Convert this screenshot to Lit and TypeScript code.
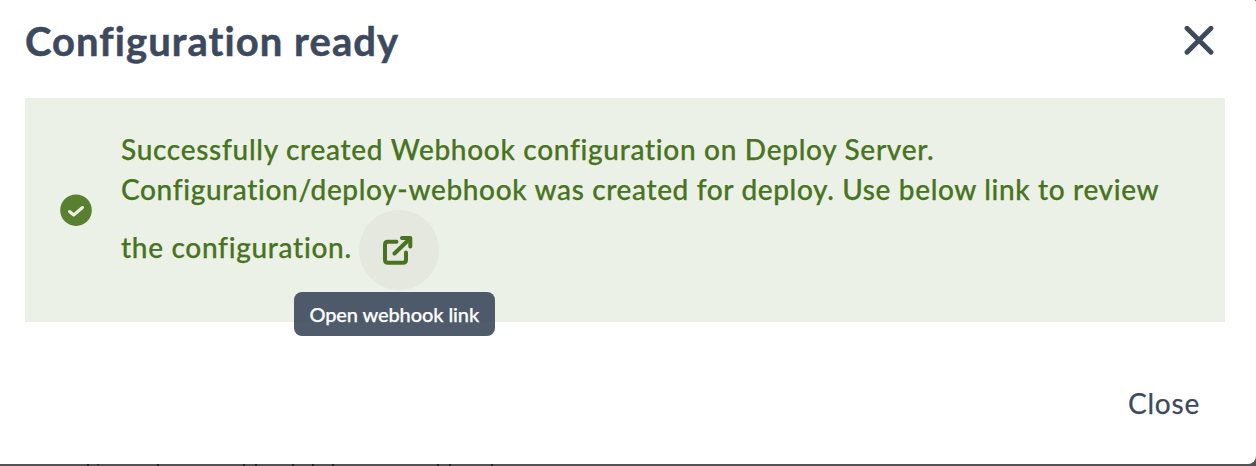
import { LitElement, html, svg, css } from "lit";
import { customElement } from "lit/decorators.js";

@customElement("app-root")
export class AppRoot extends LitElement {
  static styles = css`
    :host {
      display: block;
      height: 466px;
      overflow: hidden;
      background: #535353;
      font-family: Lato, sans-serif;
      color: #3d495c;
    }
    .page { position: relative; height: 466px; }
    .dialog {
      box-sizing: border-box;
      height: 464px;
      padding: 0 31px 0 25px;
      background: #fff;
      border-radius: 0 2px 8px 0;
      display: flex;
      flex-direction: column;
    }
    .header {
      height: 98px;
      display: flex;
      justify-content: space-between;
      align-items: flex-start;
    }
    .title {
      margin: 17px 0 0;
      font-size: 40px;
      line-height: 48px;
      font-weight: 700;
      letter-spacing: 1.05px;
      -webkit-text-stroke: 0.5px currentColor;
      white-space: nowrap;
    }
    .x { display: block; margin: 25px 10px 0 0; }
    .alert {
      box-sizing: border-box;
      height: 224px;
      padding: 32px 0 32px 35px;
      background: #ebf1e6;
      color: #487320;
      display: flex;
      align-items: center;
      gap: 29px;
    }
    .check { display: block; flex: none; }
    .message {
      font-size: 28px;
      line-height: 38px;
      font-weight: 500;
      letter-spacing: 0.64px;
      -webkit-text-stroke: 0.25px currentColor;
      white-space: nowrap;
    }
    .line { height: 40px; }
    .first { letter-spacing: 0.7px; }
    .last { height: 80px; display: flex; align-items: center; gap: 7px; letter-spacing: 0.7px; }
    .text { padding-bottom: 6px; }
    .link {
      position: relative;
      width: 80px;
      height: 80px;
      border-radius: 50%;
      background: #e4e8df;
      display: flex;
      align-items: center;
      justify-content: center;
    }
    .tip {
      position: absolute;
      top: 82px;
      left: -65px;
      box-sizing: border-box;
      width: 201px;
      height: 44px;
      border-radius: 8px;
      background: rgba(61, 73, 92, 0.9);
      color: #fff;
      font-size: 20px;
      line-height: 45px;
      letter-spacing: -0.1px;
      text-align: center;
    }
    .footer {
      display: flex;
      justify-content: flex-end;
      padding: 61px 25px 0 0;
      font-size: 28px;
      line-height: 40px;
      letter-spacing: 0.8px;
      -webkit-text-stroke: 0.25px currentColor;
    }
    .behind { position: absolute; left: 0; top: 464px; display: block; }
  `;

  render() {
    return html`
      <div class="page">
        <div class="dialog">
          <div class="header">
            <h1 class="title">Configuration ready</h1>
            <svg class="x" width="32" height="32" viewBox="0 0 32 32" fill="none" stroke="#3d495c" stroke-width="4.8" stroke-linecap="round">
              <path d="M4 3.300L28 27.300M28 3.300L4 27.300" />
            </svg>
          </div>
          <div class="alert">
            <svg class="check" width="32" height="32" viewBox="0 0 32 32">
              <circle cx="16" cy="16.2" r="15.8" fill="#588030" />
              <path d="M9.500 17.500L13.700 21L22.500 13.500" fill="none" stroke="#ebf1e6" stroke-width="3" stroke-linecap="round" stroke-linejoin="round" />
            </svg>
            <div class="message">
              <div class="line first">Successfully created Webhook configuration on Deploy Server.</div>
              <div class="line">Configuration/deploy-webhook was created for deploy. Use below link to review</div>
              <div class="last">
                <span class="text">the configuration.</span>
                <span class="link">
                  <svg width="32" height="32" viewBox="0 0 32 32" fill="none" stroke="#487320" stroke-width="4" stroke-linecap="round" stroke-linejoin="round">
                    <path d="M13.500 7.800H5Q2 7.800 2 10.800V25.700Q2 28.700 5 28.700H20Q23 28.700 23 25.700V18.500" />
                    <path d="M11.500 19.500L26 5.500" />
                    <path d="M19 4H27.300V12.500" />
                  </svg>
                  <span class="tip">Open webhook link</span>
                </span>
              </div>
            </div>
          </div>
          <div class="footer">Close</div>
        </div>
        <svg class="behind" width="1256" height="2" fill="#222">
          ${[87, 157, 243, 255, 292, 312, 332, 437, 449, 491].map(
            (x) => svg`<rect x=${x} width="2" height="2" />`
          )}
          <rect x="97" width="2" height="1" />
        </svg>
      </div>
    `;
  }
}
